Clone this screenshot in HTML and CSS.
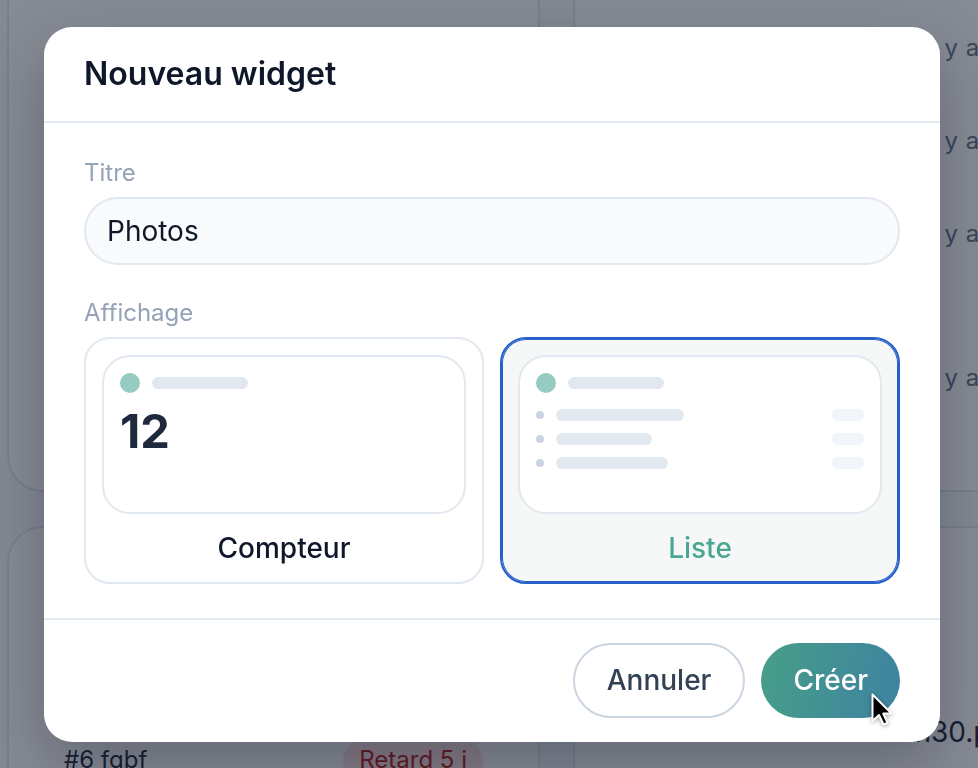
FILE: index.html
```html
<!DOCTYPE html>
<html lang="fr">
<head>
  <meta charset="utf-8">
  <title>Nouveau widget</title>
  <link rel="stylesheet" href="styles.css">
</head>
<body>
  <!-- Tableau de bord (derrière la modale) -->
  <div class="board">
    <section class="panel panel-top"></section>

    <section class="panel panel-top">
      <div class="activity">
        <div class="activity-row"><span class="activity-what">Photo ajoutée</span><span class="activity-when">Il y a 2 min</span></div>
        <div class="activity-row"><span class="activity-what">Ticket fermé</span><span class="activity-when">Il y a 1 h</span></div>
        <div class="activity-row"><span class="activity-what">Commentaire</span><span class="activity-when">Il y a 3 h</span></div>
        <div class="activity-row late-row"><span class="activity-what">Photo ajoutée</span><span class="activity-when">Il y a 5 h</span></div>
      </div>
    </section>

    <section class="panel">
      <div class="ticket-row">
        <span class="ticket-id">#6 fqbf</span>
        <span class="badge badge-late">Retard 5 j</span>
      </div>
    </section>

    <section class="panel">
      <div class="file-row">
        <span class="file-name">14h30.png</span>
      </div>
    </section>
  </div>

  <div class="backdrop">
    <div class="modal">
      <div class="modal-header">
        <h2 class="modal-title">Nouveau widget</h2>
      </div>

      <div class="modal-body">
        <div class="field">
          <label class="field-label" for="widget-title">Titre</label>
          <input class="field-input" id="widget-title" type="text" value="Photos">
        </div>

        <div class="field">
          <div class="field-label">Affichage</div>
          <div class="display-options">
            <button class="display-option" type="button">
              <div class="preview">
                <div class="preview-head">
                  <span class="preview-dot"></span>
                  <span class="preview-bar"></span>
                </div>
                <div class="preview-count">12</div>
              </div>
              <div class="option-label">Compteur</div>
            </button>

            <button class="display-option selected" type="button">
              <div class="preview">
                <div class="preview-head">
                  <span class="preview-dot"></span>
                  <span class="preview-bar"></span>
                </div>
                <div class="preview-list">
                  <div class="preview-row"><span class="row-bullet"></span><span class="row-bar" style="width: 128px"></span><span class="row-meta"></span></div>
                  <div class="preview-row"><span class="row-bullet"></span><span class="row-bar" style="width: 96px"></span><span class="row-meta"></span></div>
                  <div class="preview-row"><span class="row-bullet"></span><span class="row-bar" style="width: 112px"></span><span class="row-meta"></span></div>
                </div>
              </div>
              <div class="option-label">Liste</div>
            </button>
          </div>
        </div>
      </div>

      <div class="modal-footer">
        <button class="btn btn-secondary" type="button">Annuler</button>
        <button class="btn btn-primary" type="button">Créer</button>
      </div>
    </div>
  </div>

  <!-- pointeur de la souris -->
  <svg class="pointer" width="24" height="34" viewBox="0 0 24 34">
    <path d="M1.5 1.5 V28 L8 22 L12.5 31.5 L16.5 29.8 L12.2 20.6 H20.5 Z" fill="#000" stroke="#fff" stroke-width="2" stroke-linejoin="round"/>
  </svg>
</body>
</html>
```

FILE: styles.css
```css
* {
  margin: 0;
  padding: 0;
  box-sizing: border-box;
}

body {
  width: 978px;
  height: 768px;
  overflow: hidden;
  position: relative;
  background: #f8fafc;
  font-family: 'Inter', 'Noto Sans', sans-serif;
  -webkit-font-smoothing: antialiased;
}

/* ---- dashboard underneath ---- */

.board {
  display: grid;
  grid-template-columns: 533px 627px;
  grid-template-rows: 532px auto;
  column-gap: 33px;
  row-gap: 34px;
  width: 1200px;
  padding-left: 7px;
  margin-top: -40px;
}

.panel {
  background: #fff;
  border: 2px solid #e2e8f0;
  border-radius: 36px;
  min-height: 300px;
}

.activity {
  padding-top: 39px;
}

.activity-row {
  display: grid;
  grid-template-columns: 325px auto;
  align-items: center;
  height: 93px;
  padding-left: 24px;
  font-size: 24px;
  white-space: nowrap;
}

.activity-row.late-row {
  margin-top: 51px;
}

.activity-what {
  color: #0f172a;
}

.activity-when {
  color: #64748b;
  letter-spacing: 0.02em;
}

.ticket-row {
  display: flex;
  justify-content: space-between;
  align-items: center;
  padding: 212px 55px 0;
  font-size: 24px;
  line-height: 40px;
}

.ticket-id {
  color: #1e293b;
}

.badge {
  padding: 0 16px;
  border-radius: 20px;
}

.badge-late {
  background: #fee2e2;
  color: #b91c1c;
}

.file-row {
  padding: 180px 24px 0 310px;
  font-size: 28px;
  line-height: 48px;
  white-space: nowrap;
  color: #1e293b;
}

/* ---- modal ---- */

.backdrop {
  position: fixed;
  inset: 0;
  display: flex;
  align-items: center;
  justify-content: center;
  padding-left: 6px;
  background: rgba(15, 23, 42, 0.5);
}

.modal {
  width: 896px;
  background: #fff;
  border-radius: 28px;
  box-shadow: 0 24px 64px rgba(15, 23, 42, 0.3);
  overflow: hidden;
}

.modal-header {
  padding: 29px 40px;
  border-bottom: 2px solid #e2e8f0;
}

.modal-title {
  font-size: 32px;
  line-height: 36px;
  font-weight: 600;
  color: #0f172a;
}

.modal-body {
  display: flex;
  flex-direction: column;
  gap: 34px;
  padding: 36px 40px 34px;
}

.field-label {
  display: block;
  margin-bottom: 10px;
  font-size: 24px;
  line-height: 28px;
  color: #94a3b8;
}

.field-input {
  display: block;
  width: 100%;
  height: 68px;
  padding: 0 21px;
  border: 2px solid #e2e8f0;
  border-radius: 34px;
  background: #f8fafc;
  font-family: inherit;
  font-size: 28px;
  color: #0f172a;
  outline: none;
}

.display-options {
  display: grid;
  grid-template-columns: 1fr 1fr;
  gap: 16px;
}

.display-option {
  display: flex;
  flex-direction: column;
  height: 247px;
  padding: 16px 16px 0;
  border: 2px solid #e2e8f0;
  border-radius: 26px;
  background: #fff;
  font-family: inherit;
  text-align: left;
  cursor: pointer;
}

.display-option.selected {
  border-color: #2760c8;
  box-shadow: inset 0 0 0 1px #2760c8;
  background: #f5f8f7;
}

.preview {
  height: 159px;
  padding: 16px;
  border: 2px solid #e2e8f0;
  border-radius: 28px;
  background: #fff;
}

.preview-head {
  display: flex;
  align-items: center;
  gap: 12px;
  height: 20px;
}

.preview-dot {
  width: 20px;
  height: 20px;
  border-radius: 50%;
  background: #95cbc1;
}

.preview-bar {
  width: 96px;
  height: 12px;
  border-radius: 6px;
  background: #e2e8f0;
}

.preview-count {
  margin-top: 10px;
  font-size: 47px;
  line-height: 1.2;
  font-weight: 700;
  color: #1e293b;
}

.preview-list {
  display: flex;
  flex-direction: column;
  gap: 12px;
  margin-top: 16px;
}

.preview-row {
  display: flex;
  align-items: center;
  height: 12px;
}

.row-bullet {
  width: 8px;
  height: 8px;
  margin-right: 12px;
  border-radius: 50%;
  background: #cbd5e1;
}

.row-bar {
  height: 12px;
  border-radius: 6px;
  background: #e2e8f0;
}

.row-meta {
  width: 32px;
  height: 12px;
  margin-left: auto;
  border-radius: 6px;
  background: #f1f5f9;
}

.option-label {
  display: flex;
  align-items: center;
  justify-content: center;
  height: 68px;
  font-size: 28px;
  font-weight: 500;
  color: #0f172a;
}

.selected .option-label {
  color: #4aa794;
}

.modal-footer {
  display: flex;
  justify-content: flex-end;
  gap: 16px;
  padding: 23px 40px 24px;
  border-top: 2px solid #e2e8f0;
}

.btn {
  height: 75px;
  padding: 0 32px;
  border-radius: 38px;
  font-family: inherit;
  font-size: 28px;
  font-weight: 500;
  cursor: pointer;
}

.btn-secondary {
  border: 2px solid #cbd5e1;
  background: #fff;
  color: #334155;
}

.btn-primary {
  border: 0;
  padding: 0 32px;
  background: linear-gradient(100deg, #479e88, #3e82a1);
  color: #fff;
}

.pointer {
  position: absolute;
  left: 871px;
  top: 693px;
  filter: drop-shadow(0 1px 2px rgba(0, 0, 0, 0.35));
}
```
